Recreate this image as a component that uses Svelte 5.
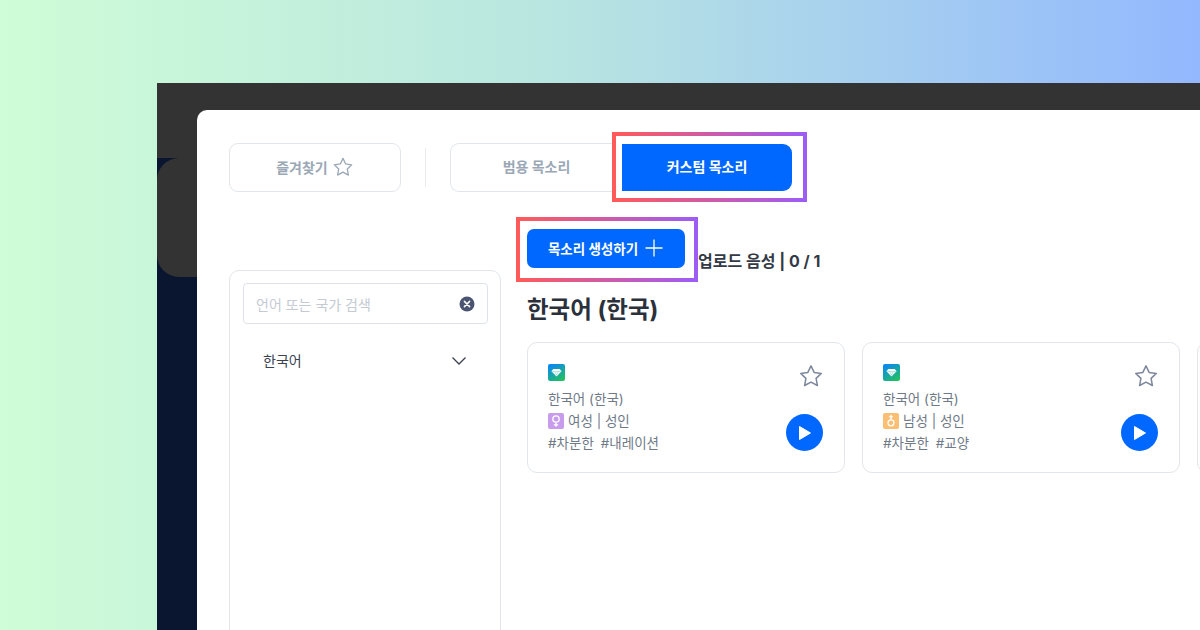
<script lang="ts">
    interface Voice {
        name: string;
        gender: "female" | "male";
        label: string;
        tags: string[];
    }

    const voices: Voice[] = [
        { name: "한국어 (한국)", gender: "female", label: "여성 | 성인", tags: ["#차분한", "#내레이션"] },
        { name: "한국어 (한국)", gender: "male", label: "남성 | 성인", tags: ["#차분한", "#교양"] },
    ];

    const STAR = "M12 2.6l2.9 6.1 6.6.9-4.8 4.6 1.2 6.6L12 17.6l-5.9 3.2 1.2-6.6-4.8-4.6 6.6-.9z";
</script>

<div class="page">
    <div class="app">
        <div class="topbar"></div>
        <div class="rail-item"></div>

        <div class="modal">
            <div class="tabs">
                <button class="fav">
                    즐겨찾기
                    <svg width="22" height="22" viewBox="0 0 24 24" fill="none" stroke="#9aa8b6" stroke-width="1.4" stroke-linejoin="round"><path d={STAR} /></svg>
                </button>
                <div class="divider"></div>
                <div class="tab-group">
                    <button class="tab">범용 목소리</button>
                    <div class="marked">
                        <span class="mark mark-tab"></span>
                        <button class="tab active">커스텀 목소리</button>
                    </div>
                </div>
            </div>

            <div class="body">
                <aside class="side">
                    <div class="search">
                        <span class="placeholder">언어 또는 국가 검색</span>
                        <svg width="16" height="16" viewBox="0 0 16 16"><circle cx="8" cy="8" r="7.5" fill="#4b5470" /><path d="M5.4 5.4l5.2 5.2M10.6 5.4l-5.2 5.2" stroke="#fff" stroke-width="1.5" stroke-linecap="round" /></svg>
                    </div>
                    <div class="lang">
                        <span>한국어</span>
                        <svg width="18" height="18" viewBox="0 0 18 18" fill="none" stroke="#3a4250" stroke-width="1.3"><path d="M2.5 5.5L9 12l6.5-6.5" /></svg>
                    </div>
                </aside>

                <main class="content">
                    <div class="toolbar">
                        <div class="marked">
                            <span class="mark mark-create"></span>
                            <button class="create">
                                목소리 생성하기
                                <svg width="20" height="20" viewBox="0 0 20 20" stroke="#fff" stroke-width="1.3"><path d="M10 1.5v17M1.5 10h17" /></svg>
                            </button>
                        </div>
                        <span class="count">업로드 음성 | 0 / 1</span>
                    </div>

                    <h2>한국어 (한국)</h2>

                    <div class="cards">
                        {#each voices as v}
                            <div class="card">
                                <div class="info">
                                    <svg class="gem" width="17" height="17" viewBox="0 0 17 17">
                                        <defs>
                                            <linearGradient id="gem" x1="0.2" y1="0" x2="0.8" y2="1">
                                                <stop offset="0" stop-color="#0a86f5" />
                                                <stop offset="1" stop-color="#22c25e" />
                                            </linearGradient>
                                        </defs>
                                        <rect width="17" height="17" rx="2" fill="url(#gem)" />
                                        <path d="M5.4 5h6.2l2 2.3-5.1 5.2-5.1-5.2z" fill="#fff" />
                                        <path d="M3.8 7.6h9.4M6.8 7.6l1.7 3.6 1.7-3.6" fill="none" stroke="#7fd0c8" stroke-width=".6" />
                                    </svg>
                                    <div class="line">{v.name}</div>
                                    <div class="line gender-line">
                                        <span class="badge {v.gender}">
                                            {#if v.gender == "female"}
                                                <svg width="16" height="16" viewBox="0 0 16 16" fill="none" stroke="#fff" stroke-width="1.3"><circle cx="8" cy="6" r="3.2" /><path d="M8 9.2v4.6M5.8 11.8h4.4" /></svg>
                                            {:else}
                                                <svg width="16" height="16" viewBox="0 0 16 16" fill="none" stroke="#fff" stroke-width="1.3"><circle cx="8" cy="9.8" r="3" /><path d="M8 6.8V2.6M6.4 4.2L8 2.6l1.6 1.6" /></svg>
                                            {/if}
                                        </span>
                                        {v.label}
                                    </div>
                                    <div class="line tags">
                                        {#each v.tags as tag}
                                            <span>{tag}</span>
                                        {/each}
                                    </div>
                                </div>
                                <div class="actions">
                                    <svg class="star" width="26" height="26" viewBox="0 0 24 24" fill="none" stroke="#7d879c" stroke-width="1.4" stroke-linejoin="round"><path d={STAR} /></svg>
                                    <span class="play">
                                        <svg width="14" height="16" viewBox="0 0 14 16"><path d="M1.5 1.5L12.5 8 1.5 14.5z" fill="#fff" stroke="#fff" stroke-linejoin="round" /></svg>
                                    </span>
                                </div>
                            </div>
                        {/each}
                        <div class="card"></div>
                    </div>
                </main>
            </div>
        </div>
    </div>
</div>

<style>
    :global(body) {
        margin: 0;
    }

    .page {
        box-sizing: border-box;
        width: 1200px;
        height: 630px;
        padding: 83px 0 0 157px;
        overflow: hidden;
        background: linear-gradient(90deg, #cffdd7 0%, #b9e6e0 45%, #93b8fe 100%);
        font-family: Inter, "Noto Sans CJK KR", "Noto Sans", sans-serif;
    }

    .app {
        position: relative;
        height: 547px;
        background: #0a1630;
    }

    .topbar {
        height: 75px;
        background: #333333;
    }

    .rail-item {
        width: 80px;
        height: 119px;
        background: #333333;
        border-radius: 22px 0 0 22px;
    }

    .modal {
        position: absolute;
        top: 27px;
        left: 40px;
        width: 1003px;
        height: 520px;
        box-sizing: border-box;
        padding: 33px 0 0 32px;
        background: #fff;
        border-radius: 10px 0 0 0;
        overflow: hidden;
    }

    button {
        font-family: inherit;
        cursor: pointer;
    }

    .tabs {
        display: flex;
        align-items: center;
        height: 49px;
    }

    .fav {
        display: flex;
        align-items: center;
        justify-content: center;
        gap: 4px;
        box-sizing: border-box;
        width: 172px;
        height: 49px;
        padding: 0 0 2px;
        background: #fff;
        border: 1px solid #e2e6ea;
        border-radius: 9px;
        color: #9aa8b6;
        font-size: 14px;
        font-weight: 700;
    }

    .divider {
        width: 1px;
        height: 39px;
        margin: 0 24px;
        background: #e8ebee;
    }

    .tab-group {
        display: flex;
        align-items: center;
        height: 49px;
        border: 1px solid #e2e6ea;
        border-right: none;
        border-radius: 9px 0 0 9px;
        box-sizing: border-box;
    }

    .tab {
        width: 171px;
        height: 47px;
        padding: 0 0 3px;
        background: none;
        border: none;
        color: #9aa8b6;
        font-size: 14px;
        font-weight: 700;
    }

    .tab.active {
        position: relative;
        display: block;
        width: 170px;
        background: #0068ff;
        border-radius: 0 9px 9px 0;
        color: #fff;
    }

    .marked {
        position: relative;
    }

    .mark {
        position: absolute;
        box-sizing: border-box;
        background: #fff;
        border: 4px solid;
        border-image: linear-gradient(90deg, #ff5a5a, #9d5cf5) 1;
    }

    .mark-tab {
        top: -12px;
        bottom: -11px;
        left: -10px;
        right: -15px;
    }

    .mark-create {
        top: -12px;
        bottom: -14px;
        left: -11px;
        right: -13px;
    }

    .body {
        display: grid;
        grid-template-columns: 272px 1fr;
        column-gap: 26px;
        margin-top: 37px;
    }

    .side {
        box-sizing: border-box;
        height: 400px;
        margin-top: 41px;
        padding: 12px 12px 12px 13px;
        border: 1px solid #e2e6ea;
        border-radius: 10px;
    }

    .search {
        display: flex;
        align-items: center;
        justify-content: space-between;
        box-sizing: border-box;
        height: 41px;
        padding: 0 12px;
        border: 1px solid #dfe3e8;
        border-radius: 4px;
    }

    .placeholder {
        color: #c3cad2;
        font-size: 14px;
    }

    .lang {
        display: flex;
        align-items: center;
        justify-content: space-between;
        padding: 26px 20px 0 20px;
        color: #3a4250;
        font-size: 14px;
        line-height: 22px;
    }

    .lang svg {
        display: block;
    }

    .content {
        min-width: 0;
    }

    .toolbar {
        display: flex;
        align-items: flex-start;
        gap: 13px;
    }

    .create {
        position: relative;
        display: flex;
        align-items: center;
        justify-content: center;
        gap: 6px;
        width: 158px;
        height: 39px;
        padding: 0 0 2px;
        background: #0068ff;
        border: none;
        border-radius: 7px;
        color: #fff;
        font-size: 13.5px;
        font-weight: 700;
    }

    .count {
        position: relative;
        margin-top: 20px;
        color: #333a45;
        font-size: 16px;
        font-weight: 700;
        line-height: 24px;
        white-space: nowrap;
    }

    h2 {
        margin: 19px 0 15px;
        color: #2b313b;
        font-size: 23.5px;
        font-weight: 700;
        line-height: 35px;
    }

    .cards {
        display: flex;
        gap: 17px;
    }

    .card {
        display: flex;
        justify-content: space-between;
        flex: none;
        box-sizing: border-box;
        width: 318px;
        height: 131px;
        padding: 21px 21px 21px 20px;
        border: 1px solid #e2e6ea;
        border-radius: 10px;
    }

    .gem {
        display: block;
        margin-bottom: 7px;
    }

    .line {
        color: #6f7a88;
        font-size: 13.5px;
        line-height: 22px;
    }

    .gender-line {
        display: flex;
        align-items: center;
        gap: 4px;
    }

    .badge {
        display: block;
        width: 16px;
        height: 16px;
        border-radius: 2px;
    }

    .badge svg {
        display: block;
    }

    .female {
        background: #c99bec;
    }

    .male {
        background: #fbbe72;
    }

    .tags {
        display: flex;
        gap: 7px;
    }

    .actions {
        display: flex;
        flex-direction: column;
        align-items: flex-end;
        justify-content: space-between;
    }

    .star {
        margin: -1px -1px 0 0;
    }

    .play {
        display: flex;
        align-items: center;
        justify-content: center;
        width: 37px;
        height: 37px;
        background: #0068ff;
        border-radius: 50%;
    }
</style>
